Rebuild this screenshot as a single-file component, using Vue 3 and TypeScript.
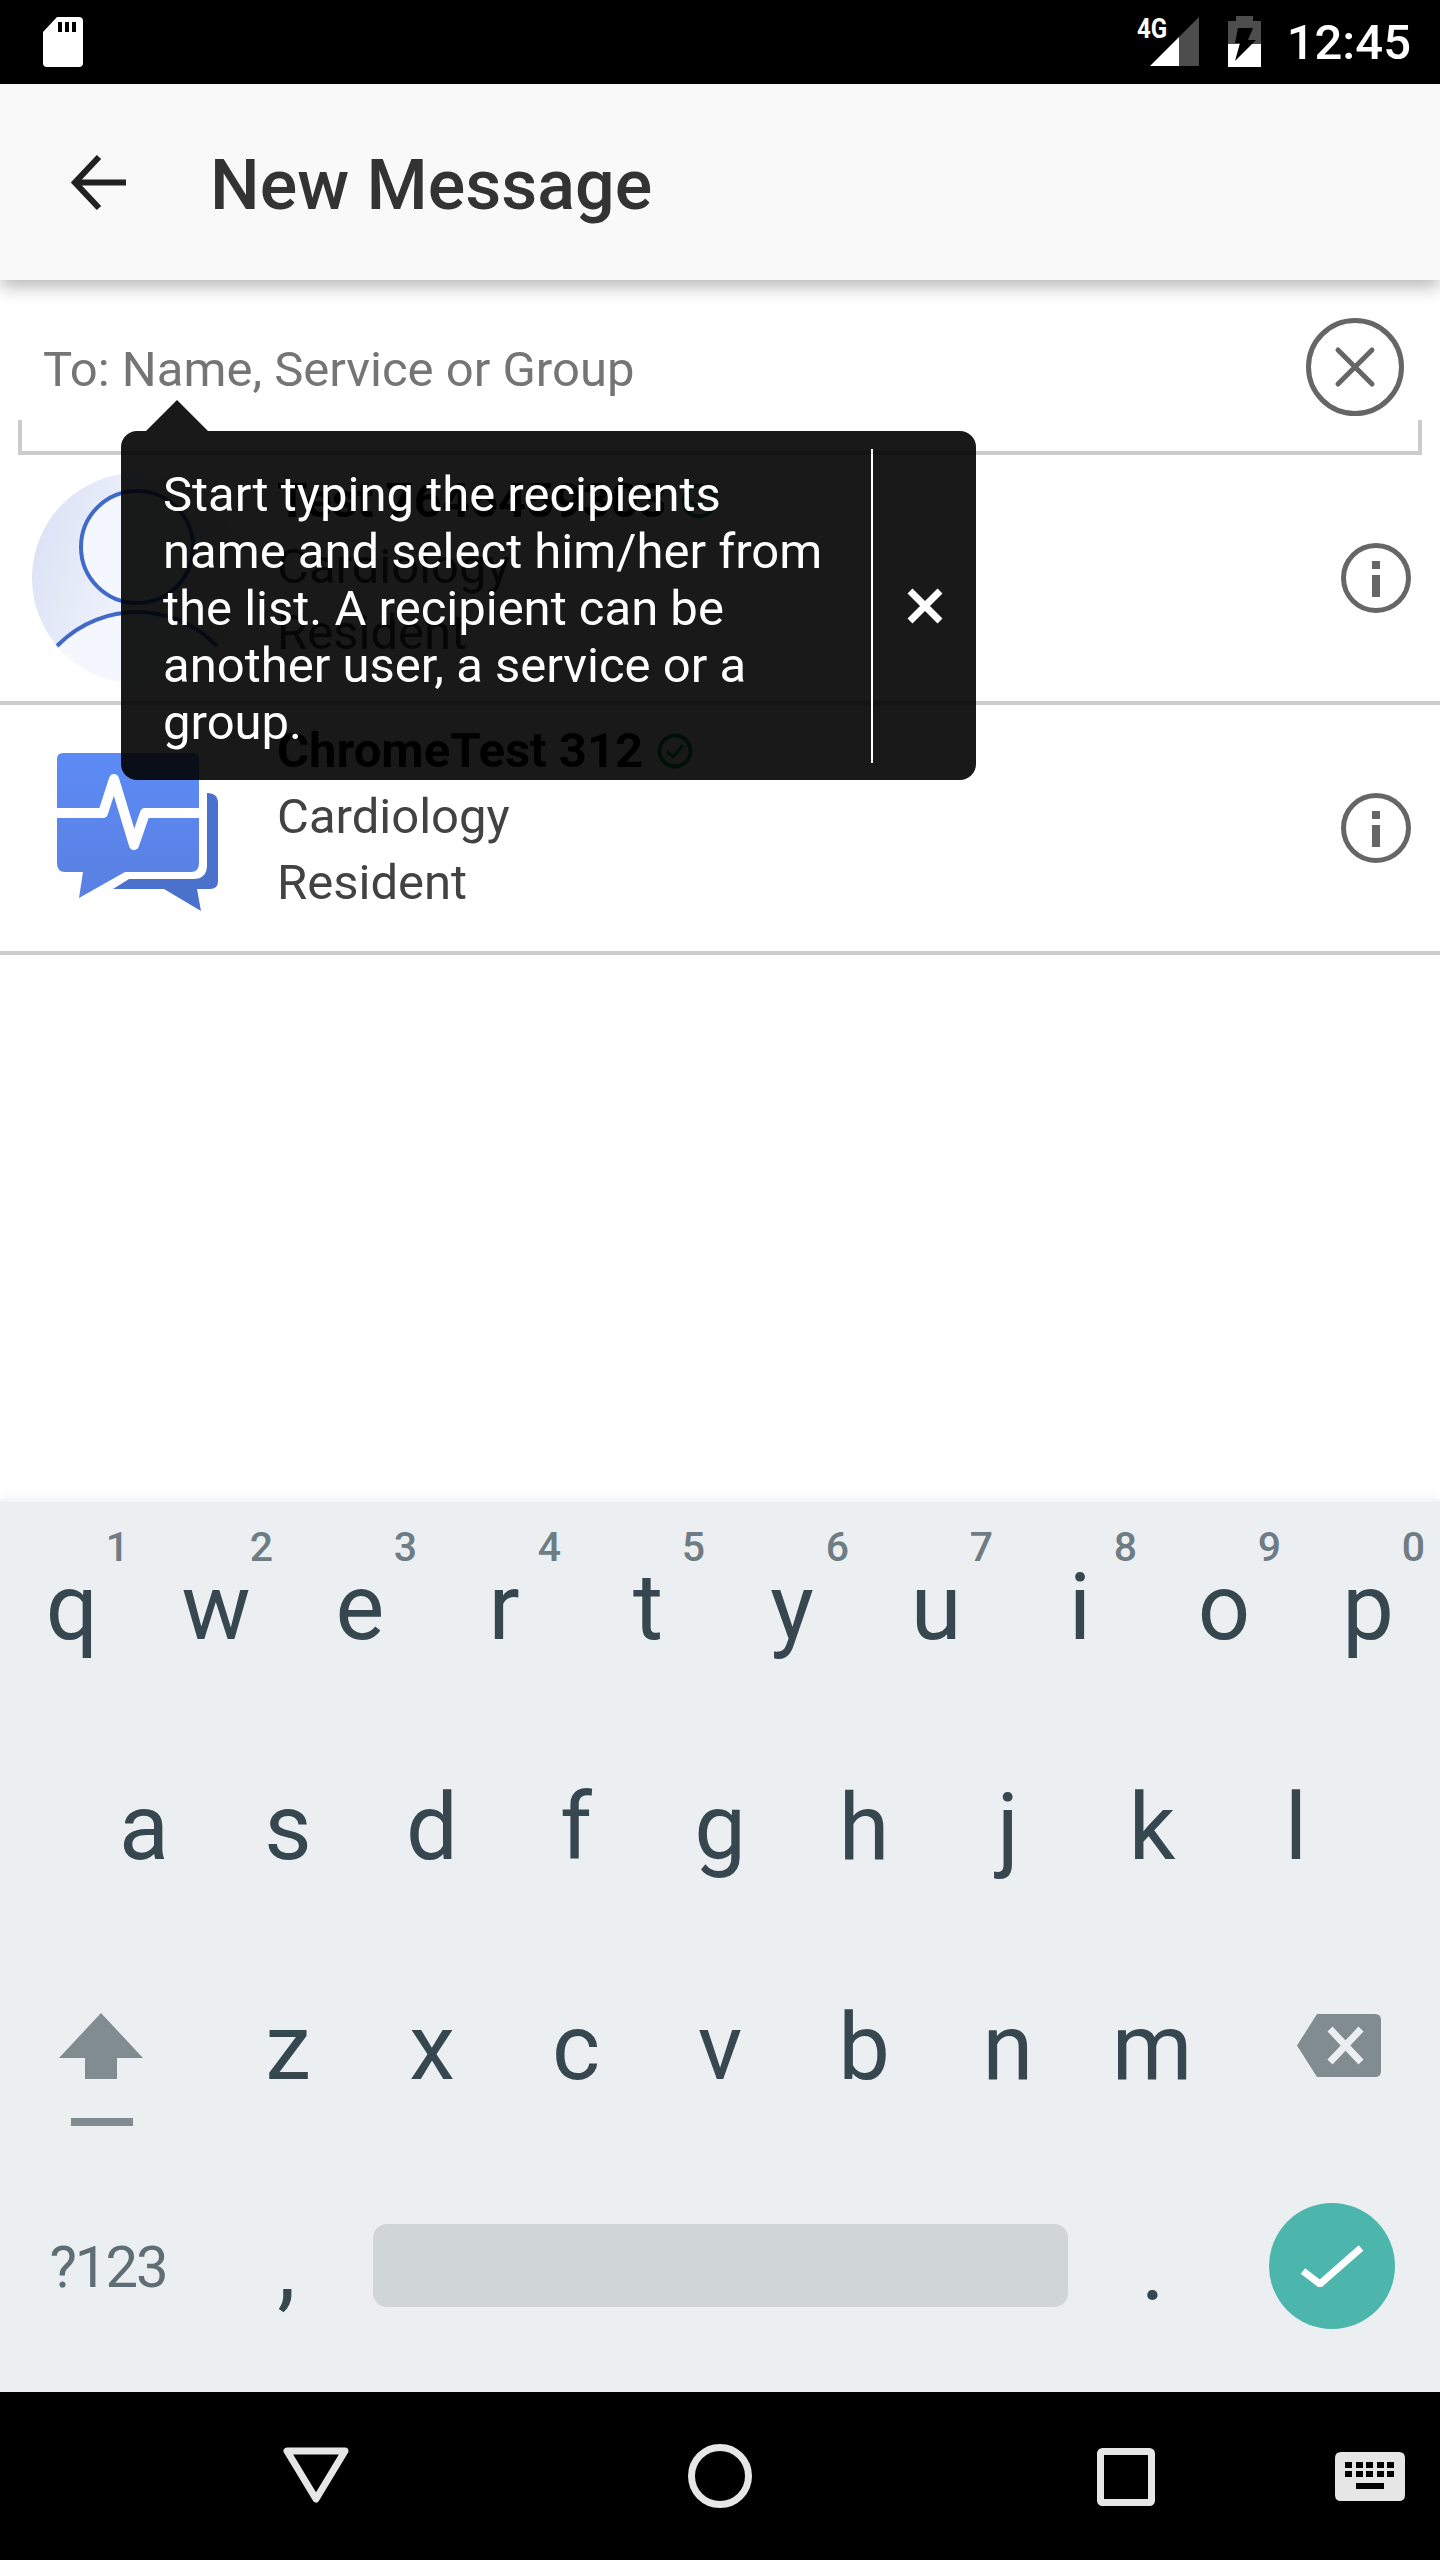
<template>
  <div class="screen">
    <div class="status-bar">
      <svg class="sd-icon" width="40" height="50" viewBox="0 0 40 50">
        <path fill="#fff" fill-rule="evenodd" d="M14 0H36Q40 0 40 4V46Q40 50 36 50H4Q0 50 0 46V15ZM15 5V15H19V5ZM22 5V15H26V5ZM29 5V15H33V5Z" />
      </svg>
      <span class="net-label">4G</span>
      <svg class="signal-icon" width="49" height="49" viewBox="0 0 49 49">
        <path fill="#4d4d4d" d="M49 0V49H29V20Z" />
        <path fill="#fff" d="M0 49L29 20V49Z" />
      </svg>
      <svg class="battery-icon" width="33" height="51" viewBox="0 0 33 51">
        <path fill="#4d4d4d" d="M8 0H25V5H33V28H0V5H8Z" />
        <path fill="#fff" d="M0 28H33V51H0Z" />
        <path fill="#000" d="M10 12H25L20 24H28L7 45L12 27H7Z" />
      </svg>
      <span class="clock">12:45</span>
    </div>

    <header class="app-bar">
      <svg class="back-arrow" width="55" height="55" viewBox="0 0 55 55">
        <path fill="none" stroke="#212121" stroke-width="6" d="M55 27.5H3M28 2L4 27.5L28 53" />
      </svg>
      <h1 class="title">New Message</h1>
    </header>

    <main class="content">
      <div class="search">
        <span class="placeholder">To: Name, Service or Group</span>
        <svg class="clear-icon" width="98" height="98" viewBox="0 0 98 98">
          <circle cx="49" cy="49" r="46.5" fill="none" stroke="#666" stroke-width="5" />
          <path fill="none" stroke="#666" stroke-width="5" stroke-linecap="round" d="M32 32L66 66M66 32L32 66" />
        </svg>
      </div>

      <div v-for="person in people" :key="person.name" class="person">
        <div class="person-pic">
          <svg v-if="person.kind === 'avatar'" class="avatar" width="210" height="210" viewBox="0 0 210 210">
            <defs>
              <linearGradient id="avatarFill" x1="0" y1="0" x2="1" y2="0.3">
                <stop offset="0" stop-color="#d9e0f4" />
                <stop offset="0.6" stop-color="#f0f3fc" />
              </linearGradient>
              <clipPath id="avatarClip"><circle cx="105" cy="105" r="105" /></clipPath>
            </defs>
            <circle cx="105" cy="105" r="105" fill="url(#avatarFill)" />
            <g clip-path="url(#avatarClip)" fill="#f5f7ff" stroke="#4169c8" stroke-width="4">
              <circle cx="105" cy="74" r="56" />
              <circle cx="105" cy="250" r="111" />
            </g>
          </svg>
          <svg v-else class="logo" width="162" height="160" viewBox="0 0 162 160">
            <defs>
              <linearGradient id="logoFront" x1="0" y1="0" x2="0" y2="1">
                <stop offset="0" stop-color="#5c8bf5" />
                <stop offset="1" stop-color="#5a80e2" />
              </linearGradient>
            </defs>
            <path fill="#4a72cc" d="M150 40Q161 40 161 50V128Q161 136 153 136H140L144 158L107 136H56L72 126H136Q150 126 150 112Z" />
            <path fill="url(#logoFront)" d="M6 0H136Q142 0 142 6V110Q142 119 134 119H68L22 145L26 119H8Q0 119 0 110V6Q0 0 6 0Z" />
            <path fill="none" stroke="#fff" stroke-width="10" stroke-linejoin="round" d="M0 60H46L57 26L77 92L88 60H142" />
          </svg>
        </div>
        <div class="person-text">
          <div class="person-name">
            {{ person.name }}
            <svg width="36" height="36" viewBox="0 0 36 36">
              <circle cx="18" cy="18" r="15.5" fill="none" stroke="#00a651" stroke-width="4" />
              <path fill="none" stroke="#00a651" stroke-width="3" d="M10 18L16 24L26 12" />
            </svg>
          </div>
          <div class="person-line">{{ person.service }}</div>
          <div class="person-line">{{ person.role }}</div>
        </div>
        <svg class="info-icon" width="70" height="70" viewBox="0 0 70 70">
          <circle cx="35" cy="35" r="32.5" fill="none" stroke="#666" stroke-width="5" />
          <path fill="#666" d="M31 18H39V26H31ZM31 32H39V54H31Z" />
        </svg>
      </div>

      <div class="tip">
        <div class="tip-text">Start typing the recipients name and select him/her from the list. A recipient can be another user, a service or a group.</div>
        <div class="tip-close">
          <svg width="36" height="36" viewBox="0 0 36 36">
            <path fill="none" stroke="#fff" stroke-width="7" d="M3 3L33 33M33 3L3 33" />
          </svg>
        </div>
      </div>
    </main>

    <section class="keyboard">
      <div class="key-row">
        <div v-for="(key, i) in topRow" :key="key" class="key">
          {{ key }}<span class="key-hint">{{ (i + 1) % 10 }}</span>
        </div>
      </div>
      <div class="key-row">
        <div v-for="key in homeRow" :key="key" class="key">{{ key }}</div>
      </div>
      <div class="key-row">
        <div class="key key-wide">
          <svg class="shift-icon" width="84" height="113" viewBox="0 0 84 113">
            <path fill="#818c90" d="M42 0L84 45H58V66H26V45H0Z" />
            <path fill="#818c90" d="M12 105H74V113H12Z" />
          </svg>
        </div>
        <div v-for="key in bottomRow" :key="key" class="key">{{ key }}</div>
        <div class="key key-wide">
          <svg class="delete-icon" width="84" height="63" viewBox="0 0 84 63">
            <path fill="#818c90" d="M20 0H78Q84 0 84 6V57Q84 63 78 63H20L0 31.500Z" />
            <path fill="none" stroke="#ebeff2" stroke-width="7" d="M33 15L64 48M64 15L33 48" />
          </svg>
        </div>
      </div>
      <div class="key-row last-row">
        <div class="key key-wide symbols">?123</div>
        <div class="key comma">,</div>
        <div class="space-bar"></div>
        <div class="key period">.</div>
        <div class="key key-wide">
          <div class="enter">
            <svg width="62" height="42" viewBox="0 0 62 42">
              <path fill="none" stroke="#fff" stroke-width="7" d="M2 26L19 39L60 3" />
            </svg>
          </div>
        </div>
      </div>
    </section>

    <nav class="nav-bar">
      <svg class="nav-back" width="66" height="56" viewBox="0 0 66 56">
        <path fill="none" stroke="#e6e6e6" stroke-width="7" stroke-linejoin="round" d="M4 4H62L33 52Z" />
      </svg>
      <svg class="nav-home" width="66" height="66" viewBox="0 0 66 66">
        <circle cx="33" cy="33" r="28.500" fill="none" stroke="#e6e6e6" stroke-width="7" />
      </svg>
      <svg class="nav-recent" width="58" height="58" viewBox="0 0 58 58">
        <rect x="3.500" y="3.500" width="51" height="51" rx="2" fill="none" stroke="#e6e6e6" stroke-width="7" />
      </svg>
      <svg class="nav-keyboard" width="70" height="49" viewBox="0 0 70 49">
        <path fill="#e6e6e6" d="M6 0H64Q70 0 70 6V43Q70 49 64 49H6Q0 49 0 43V6Q0 0 6 0Z" />
        <path fill="#000" d="M10 10H17V16H10ZM21 10H28V16H21ZM31 10H38V16H31ZM42 10H49V16H42ZM52 10H59V16H52ZM10 19H17V25H10ZM21 19H28V25H21ZM31 19H38V25H31ZM42 19H49V25H42ZM52 19H59V25H52ZM21 31H49V37H21Z" />
      </svg>
    </nav>
  </div>
</template>

<script setup lang="ts">
interface Person {
  name: string;
  service: string;
  role: string;
  kind: 'avatar' | 'logo';
}

const people: Person[] = [
  { name: 'Test 7646459303', service: 'Cardiology', role: 'Resident', kind: 'avatar' },
  { name: 'ChromeTest 312', service: 'Cardiology', role: 'Resident', kind: 'logo' }
];

const topRow = 'qwertyuiop'.split('');
const homeRow = 'asdfghjkl'.split('');
const bottomRow = 'zxcvbnm'.split('');
</script>

<style>
body {
  margin: 0;
  background: #fff;
}
</style>

<style scoped>
.screen {
  width: 1440px;
  height: 2560px;
  display: flex;
  flex-direction: column;
  overflow: hidden;
  background: #fff;
  color: #424242;
  font-family: Roboto, "Noto Sans", sans-serif;
}

.status-bar {
  height: 84px;
  flex: none;
  display: flex;
  align-items: flex-start;
  background: #000;
  color: #fff;
}

.sd-icon {
  margin: 17px 0 0 43px;
}

.net-label {
  margin: 14px 0 0 auto;
  font-size: 28px;
  font-weight: 700;
  line-height: 30px;
  transform: scaleX(0.86);
  transform-origin: right center;
}

.signal-icon {
  margin: 17px 0 0 -17px;
}

.battery-icon {
  margin: 16px 0 0 29px;
}

.clock {
  margin: 14px 29px 0 26px;
  font-size: 49px;
  line-height: 58px;
  font-weight: 500;
}

.app-bar {
  height: 196px;
  flex: none;
  display: flex;
  align-items: center;
  background: #f9f9f9;
  box-shadow: 0 6px 18px rgba(0, 0, 0, 0.3);
  position: relative;
  z-index: 1;
}

.back-arrow {
  margin-left: 71px;
}

.title {
  margin: 6px 0 0 84px;
  font-size: 70px;
  font-weight: 500;
  color: #333;
}

.content {
  flex: 1;
  position: relative;
}

.search {
  height: 175px;
  margin: 0 18px;
  padding: 0 0 0 25px;
  box-sizing: border-box;
  display: flex;
  align-items: flex-start;
  justify-content: space-between;
  position: relative;
}

.search::after {
  content: "";
  position: absolute;
  left: 0;
  right: 0;
  bottom: 0;
  height: 35px;
  border: 4px solid #ccc;
  border-top: 0;
  box-sizing: border-box;
}

.placeholder {
  margin-top: 61px;
  font-size: 49px;
  line-height: 58px;
  color: #757575;
}

.clear-icon {
  margin: 38px 18px 0 0;
}

.person {
  height: 250px;
  box-sizing: border-box;
  border-bottom: 4px solid #ccc;
  display: flex;
  align-items: center;
}

.person-pic {
  width: 277px;
  flex: none;
  align-self: flex-start;
  padding-left: 32px;
  box-sizing: border-box;
  display: flex;
}

.avatar {
  margin-top: 18px;
}

.logo {
  margin: 48px 0 0 25px;
}

.person-text {
  flex: 1;
  margin-bottom: 23px;
}

.person-name {
  display: flex;
  align-items: center;
  gap: 14px;
  font-size: 49px;
  font-weight: 700;
  line-height: 66px;
  color: #000;
}

.person-line {
  font-size: 49px;
  line-height: 66px;
}

.info-icon {
  margin-right: 29px;
}

.tip {
  position: absolute;
  left: 121px;
  top: 151px;
  width: 855px;
  height: 349px;
  display: flex;
  border-radius: 16px;
  background: rgba(0, 0, 0, 0.9);
  color: #fff;
}

.tip::before {
  content: "";
  position: absolute;
  left: 25px;
  top: -31px;
  width: 0;
  height: 0;
  border-left: 31px solid transparent;
  border-right: 31px solid transparent;
  border-bottom: 31px solid rgba(0, 0, 0, 0.9);
}

.tip-text {
  width: 750px;
  flex: none;
  box-sizing: border-box;
  padding: 35px 37px 0 42px;
  font-size: 49px;
  line-height: 57px;
}

.tip-close {
  flex: 1;
  margin: 18px 0 17px;
  border-left: 2px solid #fff;
  display: flex;
  align-items: center;
  justify-content: center;
}

.keyboard {
  height: 890px;
  flex: none;
  box-sizing: border-box;
  padding-top: 3px;
  background: #ebeff2;
  box-shadow: 0 -3px 0 #f4f5f6, 0 -8px 8px rgba(0, 0, 0, 0.03);
  display: flex;
  flex-direction: column;
  color: #37474f;
}

.key-row {
  height: 220px;
  flex: none;
  display: flex;
  justify-content: center;
}

.key {
  width: 144px;
  flex: none;
  box-sizing: border-box;
  position: relative;
  text-align: center;
  font-size: 92px;
  line-height: 206px;
}

.key-wide {
  width: 216px;
  display: flex;
  align-items: flex-start;
  justify-content: center;
}

.key-hint {
  position: absolute;
  right: 15px;
  top: 18px;
  font-size: 41px;
  line-height: 48px;
  font-weight: 500;
  color: #6f7c83;
}

.shift-icon {
  margin: 68px 14px 0 0;
}

.delete-icon {
  margin: 69px 0 0 14px;
}

.last-row {
  align-items: flex-start;
}

.symbols {
  font-size: 58px;
  line-height: 204px;
  letter-spacing: -2px;
  color: #5f6e75;
}

.space-bar {
  width: 695px;
  height: 83px;
  margin-top: 59px;
  border-radius: 14px;
  background: #d0d5d8;
}

.comma {
  width: 157px;
  padding-right: 16px;
}

.period {
  width: 156px;
  padding-left: 14px;
}

.enter {
  width: 126px;
  height: 126px;
  margin-top: 38px;
  border-radius: 50%;
  background: #4db6ac;
  display: flex;
  align-items: center;
  justify-content: center;
}

.nav-bar {
  height: 168px;
  flex: none;
  background: #000;
  position: relative;
}

.nav-back,
.nav-home,
.nav-recent,
.nav-keyboard {
  position: absolute;
}

.nav-back {
  left: 283px;
  top: 55px;
}

.nav-home {
  left: 687px;
  top: 51px;
}

.nav-recent {
  left: 1097px;
  top: 56px;
}

.nav-keyboard {
  left: 1335px;
  top: 60px;
}
</style>
